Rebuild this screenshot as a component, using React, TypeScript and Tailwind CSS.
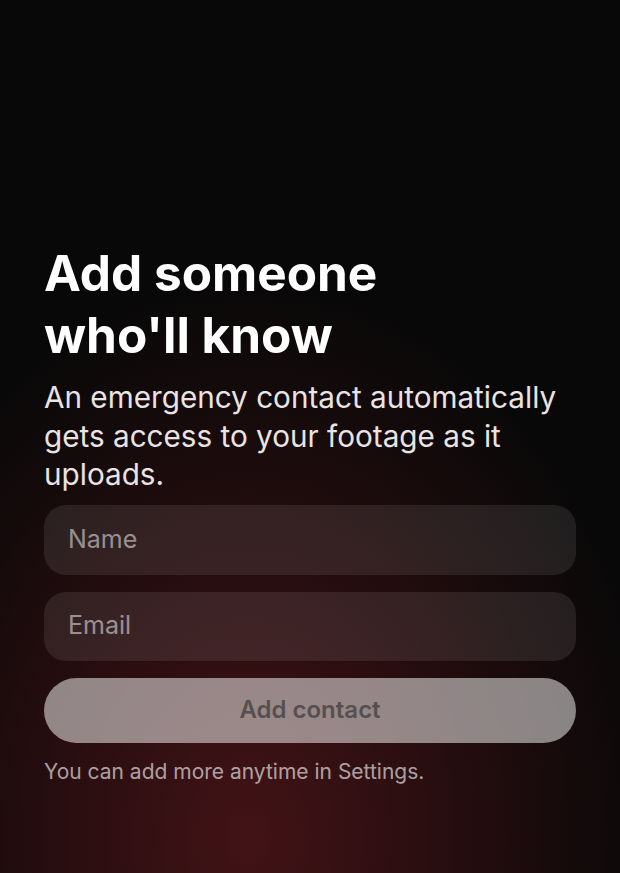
import React from "react";

export default function App() {
  return (
    <div className="relative w-[620px] h-[873px] overflow-hidden bg-[#080808] font-['Inter',sans-serif]">
      <div className="absolute inset-0 bg-[radial-gradient(ellipse_420px_560px_at_40%_96%,#421316_0%,#2a0e10_42%,rgba(10,8,8,0)_100%)]" />
      <div className="relative flex flex-col px-[44px] pt-[242px]">
        <h1 className="text-white font-bold text-[49.5px] leading-[62px]">
          Add someone
          <br />
          who'll know
        </h1>
        <p className="mt-[12px] text-[#e9e3e3] text-[29.7px] leading-[38.5px]">
          An emergency contact automatically gets access to your footage as it uploads.
        </p>
        <div className="mt-[11px] flex flex-col gap-[17px]">
          <div className="h-[70px] rounded-[22px] bg-[rgba(255,255,255,0.09)] flex items-center px-[24px]">
            <span className="text-[25px] text-[rgba(255,255,255,0.5)]">Name</span>
          </div>
          <div className="h-[69px] rounded-[22px] bg-[rgba(255,255,255,0.09)] flex items-center px-[24px]">
            <span className="text-[25px] text-[rgba(255,255,255,0.5)]">Email</span>
          </div>
          <div className="h-[65px] rounded-full bg-[rgba(255,255,255,0.5)] flex items-center justify-center">
            <span className="text-[24px] font-semibold text-[#555050]">Add contact</span>
          </div>
        </div>
        <p className="mt-[13px] text-[21px] text-[rgba(255,255,255,0.62)]">
          You can add more anytime in Settings.
        </p>
      </div>
    </div>
  );
}
